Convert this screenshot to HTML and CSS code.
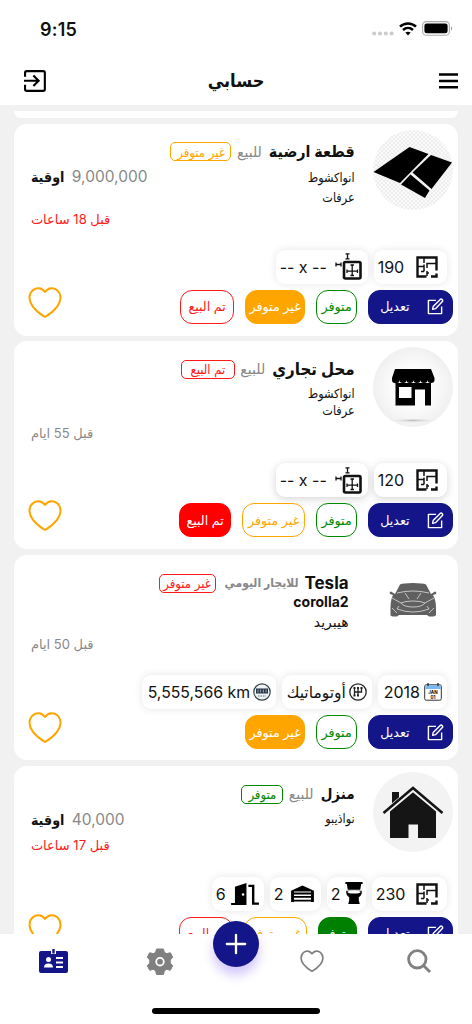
FILE: index.html
```html
<!DOCTYPE html>
<html lang="ar">
<head>
<meta charset="utf-8">
<title>حسابي</title>
<link rel="stylesheet" href="styles.css">
</head>
<body>
<svg class="sprite" width="0" height="0" aria-hidden="true">
  <symbol id="heart" viewBox="0 0 34 32"><path d="M17 5C13.500 0 8 .6 4.800 3.300C-.2 7.800 1 14.800 5 19.800C8.500 24.300 14 28.200 17 30C20 28.200 25.500 24.300 29 19.800C33 14.800 34.200 7.800 29.200 3.300C26 .6 20.500 0 17 5Z" fill="none" stroke="currentColor" stroke-linejoin="round"/></symbol>
  <symbol id="edit" viewBox="0 0 18 18"><path d="M9.500 2.500H1.500V16.500H15.500V9M6 12L6.500 9L14 1.500Q15 .7 16 1.600T16.300 3.800L9 11.300Z" fill="none" stroke="currentColor" stroke-width="1.500" stroke-linejoin="round"/></symbol>
  <symbol id="plan" viewBox="0 0 22 22"><path d="M10.500 20.500H1.500V1.500H20.500V14.500M20.500 17.500V20.500H15" fill="none" stroke="#111" stroke-width="2.400"/><path d="M8 2V7M2 10.500H8V8.500M8 10.500V15.500M5 15.500H8M11 12V7.500H20M11 15V20M11 17H13" fill="none" stroke="#111" stroke-width="1.500"/></symbol>
  <symbol id="dims" viewBox="0 0 27 27"><rect x="9" y="9" width="16.500" height="16.500" rx="1.500" fill="none" stroke="#111" stroke-width="2.600"/><path d="M17.200 12V22.500M12 18.200H22.500M15.500 12H19M15.500 22.500H19M12 16.500V20M22.500 16.500V20M12.500 .8V5.800M10.500 .8H14.500M10.500 5.800H14.500M1 11.500H6M1 9.500V13.500M6 9.500V13.500" fill="none" stroke="#111" stroke-width="1.300"/></symbol>
</svg>
<div class="phone">
  <div class="status">
    <span class="clock">9:15</span>
    <span class="signals">
      <svg width="22" height="5" viewBox="0 0 22 5" fill="#ccc"><circle cx="2.200" cy="2.500" r="2.100"/><circle cx="8" cy="2.500" r="2.100"/><circle cx="13.800" cy="2.500" r="2.100"/><circle cx="19.600" cy="2.500" r="2.100"/></svg>
      <svg width="18" height="14" viewBox="0 0 18 14" fill="none" stroke="#000" stroke-width="2.500"><path d="M1 4.600C5.500 .3 12.500 .3 17 4.600"/><path d="M4 8C7 5.200 11 5.200 14 8"/><path d="M6.300 10.600C8 9.300 10 9.300 11.700 10.600L9 13.400Z" fill="#000" stroke="none"/></svg>
      <svg width="31" height="15" viewBox="0 0 31 15"><rect x=".6" y=".6" width="26.800" height="13.600" rx="3.800" fill="none" stroke="#aaa" stroke-width="1.100"/><rect x="2.400" y="2.500" width="23.200" height="9.800" rx="2.200"/><path d="M29 5.200V9.600C30.400 9 30.400 5.800 29 5.200Z" fill="#999"/></svg>
    </span>
  </div>
  <header class="topbar">
    <svg width="22" height="22" viewBox="0 0 23 23" fill="none" stroke="#000" stroke-width="2.200"><path d="M1.100 7V3Q1.100 1.200 3 1.200H20Q21.800 1.200 21.800 3V20Q21.800 21.800 20 21.800H3Q1.100 21.800 1.100 20V15.500M0 11.300H15M9.800 5.800L15.300 11.300L9.800 16.800"/></svg>
    <h1>حسابي</h1>
    <svg width="19" height="16" viewBox="0 0 19 16"><path d="M0 1.500H19M0 8H19M0 14.300H19" stroke="#000" stroke-width="2.500"/></svg>
  </header>

  <main class="feed">
    <div class="card-end"></div>

    <article class="card land">
      <div class="summary">
        <svg class="avatar" viewBox="0 0 80 80">
          <defs><pattern id="check" width="4" height="4" patternUnits="userSpaceOnUse"><rect width="4" height="4" fill="#fafafa"/><path d="M0 0H2V2H0ZM2 2H4V4H2Z" fill="#eee"/></pattern></defs>
          <circle cx="40" cy="40" r="40" fill="url(#check)"/><path d="M36.500 17L55.500 24L27 53L.5 42ZM58 25L79 32.500L58.500 59L39.500 42.500ZM37.500 44.500L56.500 60.500L52 68L28 54.500Z"/>
        </svg>
        <div class="info">
          <div class="heading"><h2>قطعة ارضية</h2><span class="deal">للبيع</span><span class="tag amber w61">غير متوفر</span></div>
          <p class="place">انواكشوط</p><p class="place">عرفات</p>
        </div>
        <div class="aside"><p class="price"><span>9,000,000</span> <b>اوقية</b></p><p class="time red">قبل 18 ساعات</p></div>
      </div>
      <div class="specs">
        <span class="chip area"><svg width="22" height="22"><use href="#plan"/></svg><span>190</span></span>
        <span class="chip size"><svg width="27" height="27"><use href="#dims"/></svg><span dir="ltr">-- x --</span></span>
      </div>
      <div class="actions">
        <button class="edit"><svg width="17" height="17"><use href="#edit"/></svg><span>تعديل</span></button>
        <button class="green">متوفر</button><button class="amber on">غير متوفر</button><button class="red sold">تم البيع</button>
        <svg class="like" width="34" height="32"><use href="#heart"/></svg>
      </div>
    </article>

    <article class="card shop">
      <div class="summary">
        <svg class="avatar" viewBox="0 0 80 80">
          <defs>
            <radialGradient id="glow"><stop offset=".5" stop-color="#fcfcfc"/><stop offset="1" stop-color="#f0f0f0"/></radialGradient>
            <radialGradient id="ground"><stop offset="0" stop-color="#bbb"/><stop offset="1" stop-color="#f3f3f3" stop-opacity="0"/></radialGradient>
          </defs>
          <circle cx="40" cy="40" r="40" fill="url(#glow)"/><ellipse cx="40" cy="73.500" rx="26" ry="2.500" fill="url(#ground)"/><path d="M22 22H58L61.500 31V33A3.500 3 0 0 1 54.500 33A3.500 3 0 0 1 47.500 33A3.500 3 0 0 1 40.500 33A3.500 3 0 0 1 33.500 33A3.500 3 0 0 1 26.500 33A3.500 3 0 0 1 19 33V31Z"/><path fill-rule="evenodd" d="M22.500 36H58V58.500H52V42.500H42V58.500H22.500ZM26 40V51H38.500V40Z"/>
        </svg>
        <div class="info">
          <div class="heading"><h2>محل تجاري</h2><span class="deal">للبيع</span><span class="tag red w54">تم البيع</span></div>
          <p class="place">انواكشوط</p><p class="place">عرفات</p>
        </div>
        <div class="aside"><p class="time">قبل 55 ايام</p></div>
      </div>
      <div class="specs">
        <span class="chip area"><svg width="22" height="22"><use href="#plan"/></svg><span>120</span></span>
        <span class="chip size"><svg width="27" height="27"><use href="#dims"/></svg><span dir="ltr">-- x --</span></span>
      </div>
      <div class="actions">
        <button class="edit"><svg width="17" height="17"><use href="#edit"/></svg><span>تعديل</span></button>
        <button class="green">متوفر</button><button class="amber">غير متوفر</button><button class="red sold on">تم البيع</button>
        <svg class="like" width="34" height="32"><use href="#heart"/></svg>
      </div>
    </article>

    <article class="card vehicle">
      <div class="summary">
        <svg class="avatar" viewBox="0 0 80 80">
          <path d="M27 23.500Q30 22 40 22T53 23.500L58 33L62 30.500Q64 31 63 33L60 34Q63 39 63 47V54Q62 56 56 55.500L54 54H26L24 55.500Q18 56 17.500 54V47Q17.500 39 20 34L17 33Q16 31 18 30.500L22 33Z" fill="#606060"/><path d="M24 32Q40 28 56 32M32 32L36 38M48 32L44 38M19 37L28 42M61 37L52 42M28 42Q32 40 40 40T52 42Q49 46 40 46T28 42M26 45L24 48Q32 51 40 51T56 48L54 45M19 47L24 52M61 47L56 52" fill="none" stroke="#ddd" stroke-width=".8"/>
        </svg>
        <div class="info">
          <div class="heading"><h2>Tesla</h2><span class="deal bold">للايجار اليومي</span><span class="tag red w57">غير متوفر</span></div>
          <p class="model">corolla2</p><p class="fuel">هيبريد</p>
        </div>
        <div class="aside"><p class="time">قبل 50 ايام</p></div>
      </div>
      <div class="specs">
        <span class="chip year"><svg width="18" height="18" viewBox="0 0 18 18"><rect x=".7" y="1.800" width="16.600" height="15.400" rx="1.500" fill="#fff" stroke="#333"/><path d="M1.200 2.300H16.800V6H1.200Z" fill="#79b9f2"/><path d="M4 0V3M14 0V3" stroke="#333" stroke-width="1.400"/><text x="9" y="11.400" class="cal-text">JAN</text><text x="9" y="15.800" class="cal-text">01</text></svg><span>2018</span></span>
        <span class="chip gear"><svg width="18" height="18" viewBox="0 0 18 18" fill="none" stroke="#222" stroke-width="1.300"><circle cx="9" cy="9" r="8.200"/><path d="M5.500 5V12.500M5.500 9H12.500V5M9 5V12.500"/><path d="M5.500 4V6M9 4V6M12.500 4V6M5.500 11.500V13.500M9 11.500V13.500" stroke-width="2"/></svg><span>أوتوماتيك</span></span>
        <span class="chip odo"><svg width="18" height="18" viewBox="0 0 18 18"><circle cx="9" cy="9" r="8.200" fill="#eef2f4" stroke="#344" stroke-width="1.200"/><rect x="3" y="5.500" width="12" height="5" fill="#234"/><path d="M5 6.500V9.500M7.700 6.500V9.500M10.400 6.500V9.500M13 6.500V9.500" stroke="#ccd" stroke-width=".8"/><path d="M5 13H13" stroke="#567" stroke-dasharray="1.500 1"/></svg><span dir="ltr">5,555,566 km</span></span>
      </div>
      <div class="actions">
        <button class="edit"><svg width="17" height="17"><use href="#edit"/></svg><span>تعديل</span></button>
        <button class="green">متوفر</button><button class="amber on">غير متوفر</button>
        <svg class="like" width="34" height="32"><use href="#heart"/></svg>
      </div>
    </article>

    <article class="card house">
      <div class="summary">
        <svg class="avatar" viewBox="0 0 80 80"><circle cx="40" cy="40" r="40" fill="#f3f3f3"/><path d="M17 36L40 19L63 36V66H45V52.500H35.500V66H17Z" fill="#151515"/><path d="M19 32V20H26V26" fill="#151515"/><path d="M10 42L40 17L70 42" fill="none" stroke="#f3f3f3" stroke-width="5"/><path d="M10.500 41L40 16L69.500 41" fill="none" stroke="#151515" stroke-width="2.500"/></svg>
        <div class="info">
          <div class="heading"><h2>منزل</h2><span class="deal">للبيع</span><span class="tag green w42">متوفر</span></div>
          <p class="place">نواذيبو</p>
        </div>
        <div class="aside"><p class="price"><span>40,000</span> <b>اوقية</b></p><p class="time red">قبل 17 ساعات</p></div>
      </div>
      <div class="specs">
        <span class="chip area wide"><svg width="22" height="22"><use href="#plan"/></svg><span>230</span></span>
        <span class="chip bath"><svg width="18" height="23" viewBox="0 0 18 24"><path d="M0 0H18V2H16.500L15.500 8H2.500L1.500 2H0ZM1 9H17Q18 13 14 16V19L15 23H3L4 19V16Q0 13 1 9Z"/><ellipse cx="9" cy="10.500" rx="7" ry="1.600" fill="#fff"/></svg><span>2</span></span>
        <span class="chip garage"><svg width="25" height="19" viewBox="0 0 26 20"><path d="M1 19V7L13 1.500L25 7V19H22V8H4V19Z"/><path d="M4 10H22M4 13.500H22M4 17.500H22" stroke="#000" stroke-width="2"/></svg><span>2</span></span>
        <span class="chip door"><svg width="29" height="24" viewBox="0 0 30 25"><path d="M0 22H4V5L16 1V24H0Z"/><circle cx="12.500" cy="13" r="1.300" fill="#fff"/><path d="M18 4H23V22.500H29" fill="none" stroke="#000" stroke-width="2.500"/></svg><span>6</span></span>
      </div>
      <div class="actions">
        <button class="edit"><svg width="17" height="17"><use href="#edit"/></svg><span>تعديل</span></button>
        <button class="green on">متوفر</button><button class="amber">غير متوفر</button><button class="red sold">تم البيع</button>
        <svg class="like" width="34" height="32"><use href="#heart"/></svg>
      </div>
    </article>
  </main>

  <nav class="tabs">
    <svg class="account" width="29" height="24" viewBox="0 0 29 24"><path d="M2 2H12V5H17V2H27Q29 2 29 4V22Q29 24 27 24H2Q0 24 0 22V4Q0 2 2 2Z" fill="#131589"/><rect x="13.300" y="0" width="2.400" height="4.500" fill="#131589"/><circle cx="9.500" cy="10.500" r="2.500" fill="#fff"/><path d="M5 18.500Q5 14.500 9.500 14.500T14 18.500ZM17 8H24V10H17ZM17 12.500H24V14.500H17ZM17 17H24V19H17Z" fill="#fff"/></svg>
    <svg class="settings" width="26" height="27" viewBox="0 0 26 27"><path d="M9.500 1H16.500L17.300 4.300L19.800 5.700L23.300 4.700L25.700 9.300L23.200 12V15L25.700 17.700L23.300 22.300L19.800 21.300L17.300 22.700L16.500 26.500H9.500L8.700 22.700L6.200 21.300L2.700 22.300L.3 17.700L2.800 15V12L.3 9.300L2.700 4.700L6.200 5.700L8.700 4.300Z" fill="#808080" stroke="#808080" stroke-linejoin="round"/><circle cx="13" cy="13.700" r="3.800" fill="#808080" stroke="#fff" stroke-width="1.800"/></svg>
    <span class="add"><svg width="20" height="20" viewBox="0 0 20 20"><path d="M10 .8V19.200M.8 10H19.200" stroke="#fff" stroke-width="2.300" stroke-linecap="round"/></svg></span>
    <svg class="fav" width="24" height="23"><use href="#heart"/></svg>
    <svg width="24" height="24" viewBox="0 0 24 24" fill="none" stroke="#808080" stroke-width="2.800"><circle cx="10.300" cy="10.300" r="8.700"/><path d="M16.500 16.500L23 23"/></svg>
    <span class="home-bar"></span>
  </nav>
</div>
</body>
</html>
```
FILE: styles.css
```css
* { box-sizing: border-box; }
body { margin: 0; font-family: Inter, "DejaVu Sans", sans-serif; color: #111; background: #fff; }
h1, h2, p { margin: 0; }
svg { display: block; flex: none; overflow: visible; }
.sprite { position: absolute; }
.phone { width: 472px; height: 1024px; display: flex; flex-direction: column; overflow: hidden; background: #fff; }

.status { height: 56px; flex: none; display: flex; justify-content: space-between; padding: 0 19px 0 40px; line-height: 59px; }
.clock { font-size: 18px; font-weight: 600; letter-spacing: .2px; }
.signals { display: flex; align-items: center; height: 57px; gap: 5px; }
.signals svg:first-child { margin-top: 9px; }
.topbar { height: 49px; flex: none; display: flex; justify-content: space-between; align-items: center; padding: 0 14px 0 24px; }
h1, h2, .place, .tag, .deal.bold, .price b { font-family: Inter, "DejaVu Sans Condensed", "DejaVu Sans", sans-serif; }
h1 { font-size: 18px; line-height: 30px; font-weight: 700; margin-right: 13px; }

.feed { height: 828.500px; flex: none; overflow: hidden; background: #f1f1f1; padding: 6px 13.700px 0; display: flex; flex-direction: column; gap: 5.900px; }
.card-end { height: 7px; flex: none; background: #fff; border-radius: 0 0 12px 12px; }
.card { direction: rtl; flex: none; height: 211.700px; background: #fff; border-radius: 13px; padding: 6px 5.700px 0; display: flex; flex-direction: column; }
.shop { height: 207.700px; }
.vehicle { height: 205.300px; }
.summary { display: flex; height: 120px; flex: none; }
.shop .summary { height: 116px; }
.vehicle .summary { height: 114px; }
.house .summary { height: 104.500px; }
.avatar { width: 80px; height: 80px; }
.info { padding: 7.500px 18px 0 0; flex: 1; min-width: 0; }
.vehicle .info { padding: 7.500px 24px 0 0; }
.heading { display: flex; align-items: center; height: 28px; white-space: nowrap; margin-bottom: 1.500px; }
h2 { font-size: 16px; font-weight: 700; line-height: 26px; }
.shop h2 { font-size: 16.800px; }
.vehicle h2 { font-size: 17px; }
.house h2 { font-size: 15px; }
.deal { color: #888; font-size: 14px; margin-right: 7px; }
.deal.bold { font-size: 12px; font-weight: 600; margin-right: 6px; }
.tag { display: flex; flex: none; align-items: center; justify-content: center; height: 19px; border: 1.500px solid; border-radius: 5px; font-size: 13px; margin-right: 5.500px; margin-top: 1px; }
.w61 { width: 61px; } .w54 { width: 54px; } .w57 { width: 57px; margin-right: 9px; } .w42 { width: 42px; }
.place { font-size: 12.500px; line-height: 20px; }
.land .place:nth-child(2) { padding-top: 1px; }
.shop .place { line-height: 16.500px; }
.shop .place:nth-child(2) { padding-top: 2px; }
.model { font-size: 14px; font-weight: 700; line-height: 14px; margin-top: -3.500px; }
.fuel { font-size: 14px; line-height: 24px; padding-top: 1px; }
.aside { width: 140px; flex: none; padding: 35.500px 0 0 11.500px; text-align: left; white-space: nowrap; display: flex; flex-direction: column; }
.price { font-size: 15.500px; line-height: 24px; color: #888; }
.price b { color: #111; font-size: 14.200px; margin-right: 3px; }
.time { font-size: 13px; line-height: 20px; color: #888; }
.land .time { margin-top: 19.500px; }
.house .time { margin-top: 3.500px; }
.shop .time { margin-top: 40.500px; }
.vehicle .time { margin-top: 37px; }

.specs { display: flex; gap: 6px; padding-right: 6px; margin-bottom: 6px; }
.chip { height: 34px; flex: none; border-radius: 9px; background: #fff; box-shadow: 0 0 9px rgba(0,0,0,.1); display: flex; align-items: center; justify-content: space-between; font-size: 16px; padding: 0 9px 0 4px; white-space: nowrap; }
.shop .chip { box-shadow: 0 2px 9px rgba(0,0,0,.17); }
.area { width: 73px; } .wide { width: 75px; } .size { width: 92px; padding-right: 6px; }
.year { width: 69px; padding: 0 5px 0 6px; } .gear { width: 90px; padding: 0 5px; } .odo { width: 134px; padding: 0 5px 0 6px; }
.odo { font-size: 15.800px; } .gear { font-size: 15.500px; }
.bath { width: 39px; padding: 0 3px 0 4px; } .garage { width: 51px; padding: 0 6px 0 4px; } .door { width: 52px; padding: 0 4px; }
.cal-text { font: 700 4.500px Inter, sans-serif; text-anchor: middle; }

.red { color: #ff1a1a; } .amber { color: #ffa500; } .green { color: #008800; }
.time.red { color: #ff1a1a; }
.actions { display: flex; align-items: flex-start; gap: 11px; }
button { height: 34px; padding: 0; flex: none; border: 1.500px solid; border-radius: 12px; background: none; font: 12.700px Inter, "DejaVu Sans", sans-serif; white-space: nowrap; display: flex; align-items: center; justify-content: center; }
button.edit { width: 84.500px; background: #131589; color: #fff; border-color: #131589; gap: 17px; justify-content: flex-start; padding-right: 8px; }
button.green { width: 41px; } button.amber { width: 63px; } button.sold { width: 54px; }
button.on { color: #fff; }
button.green.on { width: 39px; background: #008000; border-color: #008000; }
button.amber.on { width: 60px; background: #ffa500; border-color: #ffa500; }
button.sold.on { width: 52px; background: #f00; border-color: #f00; }
.like { color: #ffa500; stroke-width: 2; margin: -3px auto 0 8.500px; }

.tabs { position: relative; flex: 1; display: flex; align-items: flex-start; background: #fff; padding: 15.500px 0 0 39px; }
.settings { margin: -1px 40px 0 79px; }
.fav { color: #808080; stroke-width: 2.400; margin: 1px 83px 0 41px; }
.add { width: 46px; height: 46px; flex: none; border-radius: 50%; background: #131589; display: flex; align-items: center; justify-content: center; margin-top: -28px; box-shadow: 0 8px 11px rgba(112,70,240,.3); }
.home-bar { position: absolute; left: 152px; bottom: 10px; width: 168px; height: 6px; border-radius: 3px; background: #000; }
```
